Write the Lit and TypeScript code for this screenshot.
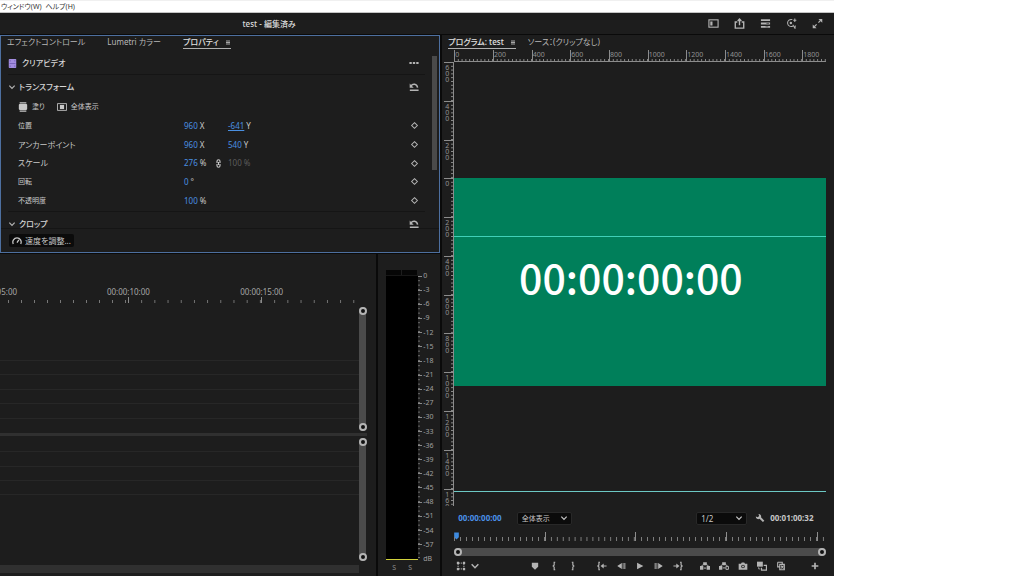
import { LitElement, html, css, svg } from "lit";
import { customElement } from "lit/decorators.js";

const shapes: Record<string, unknown> = {
  workspace: svg`<rect x="1" y="2" width="10" height="8" fill="none" stroke="currentColor" stroke-width="1.2"/><rect x="2.5" y="3.8" width="2.4" height="4.4" fill="currentColor"/>`,
  share: svg`<path d="M3.6 4.4H1.4V11h9.2V4.4H8.4M6 8V1.6M4 3.3L6 1.2l2 2.1" fill="none" stroke="currentColor" stroke-width="1.5"/>`,
  queue: svg`<path d="M1 2.4h10M1 6h10M1 9.6h10" stroke="currentColor" stroke-width="2"/><path d="M7 6h3M6 9.6h3" stroke="#1d1d1d" stroke-width=".6"/>`,
  review: svg`<path d="M7.6 8.800A3.900 3.900 0 1 1 7 1.800M7.400 7.400l2.400 3.800.3-3M9.600 .6v3.800M7.900 2.500h3.400" fill="none" stroke="currentColor" stroke-width="1.100"/><circle cx="5.300" cy="5.400" r="1.300" fill="currentColor"/>`,
  expand: svg`<path d="M7 1h4.200v4.200zM.8 7v4.200H5z" fill="currentColor"/><path d="M7 5l2.400-2.400M2.600 9.400L5 7" stroke="currentColor" stroke-width="1.400"/>`,
  menu: svg`<path d="M2 3h8M2 6h8M2 9h8" stroke="currentColor" stroke-width="1.400"/>`,
  clip: svg`<rect x="1" y="0" width="10" height="12" rx="1" fill="#a38de0"/><path d="M2 2.500h2M2 6h8M2 9.500h2M8 2.500h2M8 9.500h2" stroke="#6d5ab0" stroke-width="1"/>`,
  more: svg`<path d="M.5 4.800h2.800v2.400H.5zM4.600 4.800h2.800v2.400H4.600zM8.700 4.800h2.800v2.400H8.700z" fill="currentColor"/>`,
  down: svg`<path d="M2 4l4 4 4-4" fill="none" stroke="currentColor" stroke-width="1.800"/>`,
  reset: svg`<path d="M2.500 4.800C4 1.800 9.500 1.400 10.300 6.800M1 9.800h10.500" fill="none" stroke="currentColor" stroke-width="1.800"/><path d="M.8 1.800v5h4.800z" fill="currentColor"/>`,
  fill: svg`<rect x="1" y="2.500" width="10" height="7" rx="1" fill="currentColor"/><path d="M2 1h8M2 11h8" stroke="currentColor" stroke-width="1.400"/>`,
  fit: svg`<rect x=".7" y="2" width="10.600" height="8" fill="none" stroke="currentColor" stroke-width="1"/><rect x="3.500" y="3.500" width="5" height="5" fill="currentColor"/>`,
  diamond: svg`<path d="M6 2.200L9.800 6 6 9.800 2.200 6z" fill="none" stroke="currentColor" stroke-width="1.400"/>`,
  link: svg`<path d="M4 5.200V3a2 2 0 0 1 4 0v2.200M4 6.800V9a2 2 0 0 0 4 0V6.800M6 4v4" fill="none" stroke="currentColor" stroke-width="1.500"/>`,
  gauge: svg`<path d="M1.500 9.500a5 5 0 1 1 9 0M6 8l2.200-3.400" fill="none" stroke="currentColor" stroke-width="1.500"/>`,
  wrench: svg`<path d="M1 4.200L3.200 5.200 5 3.600 4.200 1.200A3 3 0 0 1 7.200 5.200l4 4-1.700 1.700L5.400 7A3 3 0 0 1 1 4.200z" fill="currentColor"/>`,
  safe: svg`<path d="M2.500 3.500v5M9.500 3.500v5M3.500 2.500h5M3.500 9.500h5" stroke="currentColor" stroke-width="1.200" stroke-dasharray="1.500 .8"/><path d="M1 1h2.600v2.600H1zM8.400 1H11v2.600H8.400zM1 8.400h2.600V11H1zM8.400 8.400H11V11H8.400z" fill="currentColor"/>`,
  marker: svg`<path d="M2.200 2.200h7.600V7L6 10.500 2.200 7z" fill="currentColor"/>`,
  inPoint: svg`<path d="M7.500 1.500H6.200v3.300L5 6l1.200 1.200v3.300h1.300" fill="none" stroke="currentColor" stroke-width="1.400"/>`,
  outPoint: svg`<path d="M4.500 1.500h1.300v3.300L7 6 5.800 7.200v3.300H4.500" fill="none" stroke="currentColor" stroke-width="1.400"/>`,
  goIn: svg`<path d="M3.600 1.500H2.300v3.300L1 6l1.300 1.200v3.300h1.300M6 6h5.500" fill="none" stroke="currentColor" stroke-width="1.400"/><path d="M8 3v6L4.300 6z" fill="currentColor"/>`,
  back: svg`<path d="M7 2.500v7L1.500 6zM8 2.500h1v7H8zM10 2.500h1.200v7H10z" fill="currentColor"/>`,
  play: svg`<path d="M2.500 2l7.500 4-7.500 4z" fill="currentColor"/>`,
  forward: svg`<path d="M5 2.500v7L10.500 6zM3 2.500h1v7H3zM.8 2.500H2v7H.8z" fill="currentColor"/>`,
  goOut: svg`<path d="M8.400 1.500h1.300v3.300L11 6 9.700 7.200v3.300H8.400M.5 6H6" fill="none" stroke="currentColor" stroke-width="1.400"/><path d="M4 3v6l3.700-3z" fill="currentColor"/>`,
  lift: svg`<path d="M0 6h4v4.500H0zM8 6h4v4.500H8zM3.800 1.500h4.400v3.500H3.800z" fill="currentColor"/><path d="M2 6l2-2M10 6L8 4M4.500 8.500h3" stroke="currentColor" stroke-width="1.200"/>`,
  extract: svg`<path d="M0 6h4v4.500H0zM3.800 1.500h4.400v3.500H3.800z" fill="currentColor"/><path d="M8.300 6.500h3V10h-3zM2 6l2-2M10 6L8 4M4.500 8.300h3" fill="none" stroke="currentColor" stroke-width="1.200"/>`,
  camera: svg`<path fill-rule="evenodd" d="M.8 3.300h2.800l.9-1.500h3l.9 1.500h2.800v7.200H.8zM6 4.400a2.200 2.200 0 1 0 0 4.400 2.200 2.200 0 0 0 0-4.400z" fill="currentColor"/><circle cx="6" cy="6.600" r="1.200" fill="currentColor"/>`,
  compare: svg`<path d="M0 .8h7v6H0z" fill="currentColor"/><path d="M8 5.200h3.300V11H5.400V8" fill="none" stroke="currentColor" stroke-width="1.400"/><path d="M2 7.500v2h2" fill="none" stroke="currentColor"/>`,
  proxy: svg`<path d="M2 1.500h5.500v2M2 1.500V7h2M4.500 4h5.500v6.500H4.500zM6 5.500l3 3.500M9 5.500L6 9" fill="none" stroke="currentColor" stroke-width="1.300"/>`,
  plus: svg`<path d="M6 2v8M2 6h8" stroke="currentColor" stroke-width="2"/>`,
  playhead: svg`<path d="M2 0h8v8l-4 4-4-4z" fill="#3f8be0"/>`,
};

const icon = (name: string) =>
  html`<svg class="icon" viewBox="0 0 12 12" aria-hidden="true">${shapes[name]}</svg>`;

const iconButton = (name: string, label: string) =>
  html`<button class="tool" aria-label=${label}>${icon(name)}</button>`;

interface Row {
  label: string;
  x: string;
  xUnit: string;
  y?: string;
  yUnit?: string;
  linked?: boolean;
  active?: boolean;
}

const rows: Row[] = [
  { label: "位置", x: "960", xUnit: "X", y: "-641", yUnit: "Y", active: true },
  { label: "アンカーポイント", x: "960", xUnit: "X", y: "540", yUnit: "Y" },
  { label: "スケール", x: "276", xUnit: "%", y: "100", yUnit: "%", linked: true },
  { label: "回転", x: "0", xUnit: "°" },
  { label: "不透明度", x: "100", xUnit: "%" },
];

const base = css`
  *, *::before, *::after { box-sizing: border-box; }
  button, select {
    font: inherit; color: inherit; background: none; border: 0; padding: 0; margin: 0;
    font-feature-settings: inherit;
  }
  .icon { display: block; width: 10px; height: 10px; flex: none; }
  .tool { display: flex; align-items: center; justify-content: center; width: 12px; height: 12px; flex: none; color: #b4b4b4; }
  .tabs { display: flex; align-items: flex-start; height: 14px; }
  .tab { display: flex; align-items: center; gap: 6px; height: 13px; border-bottom: 1px solid transparent; white-space: nowrap; line-height: 12px; color: #b8b8b8; }
  .tab.on { border-color: #b0b0b0; color: #e2e2e2; font-weight: 500; }
  .tab .icon { width: 6px; height: 7px; }
`;

@customElement("properties-panel")
export class PropertiesPanel extends LitElement {
  static styles = [base, css`
    :host { display: flex; flex-direction: column; border: 1px solid #4d6f9f; background: #1d1d1d; min-width: 0; min-height: 0; overflow: hidden; }
    .tabs { gap: 22px; padding-left: 6px; }
    .body { display: flex; flex: 1; min-height: 0; margin-top: 2px; border-bottom: 1px solid #151515; }
    .content { flex: 1; min-width: 0; overflow: hidden; padding: 0 7px; color: #c8c8c8; }
    .line { display: flex; align-items: center; padding: 0 5px 0 0; }
    .line .tool { margin-left: auto; }
    .clip { height: 23px; gap: 5px; border-bottom: 1px solid #151515; font-weight: 500; color: #d6d6d6; }
    .clip > .icon { width: 9px; height: 9px; }
    .section { height: 24px; gap: 4px; color: #d6d6d6; font-weight: 500; }
    .section .fold { width: 7px; margin-left: 0; }
    .section .fold .icon { width: 8px; height: 8px; }
    .grid { display: grid; grid-template-rows: repeat(6, 1fr); height: 114px; margin-top: -1px; padding-bottom: 1px; border-bottom: 1px solid #151515; font-size: 7px; }
    .modes { display: flex; align-items: center; gap: 12px; padding-left: 10px; }
    .mode { display: flex; align-items: center; gap: 4px; }
    .prop { display: grid; grid-template-columns: 166px 30px 14px 1fr 12px; align-items: center; padding: 0 5px 0 10px; }
    .kana { font-size: 8px; }
    .num { display: flex; align-items: baseline; gap: 2px; font-size: 8px; line-height: 12px; white-space: nowrap; }
    .num button { color: #4a8fe0; line-height: 12px; }
    .num .active { text-decoration: underline; }
    .dim, .num .dim { color: #5c5c5c; }
    .prop .icon { width: 9px; height: 9px; }
    .scroll { width: 5px; margin-right: 2px; padding-top: 4px; }
    .thumb { height: 66%; background: #4a4a4a; }
    .foot { height: 23px; display: flex; align-items: center; padding: 0 0 0 8px; }
    .speed { display: flex; align-items: center; gap: 3px; height: 13px; padding: 0 3px; background: #0b0b0b; border-radius: 2px; color: #c8c8c8; }
  `];

  render() {
    return html`
      <div class="tabs" role="tablist">
        <button class="tab" role="tab">エフェクトコントロール</button>
        <button class="tab" role="tab">Lumetri カラー</button>
        <button class="tab on" role="tab" aria-selected="true">プロパティ${icon("menu")}</button>
      </div>
      <div class="body">
        <div class="content">
          <div class="line clip">${icon("clip")}<span>クリアビデオ</span>${iconButton("more", "その他")}</div>
          <div class="line section">
            <button class="tool fold" aria-label="折りたたむ">${icon("down")}</button>
            <span>トランスフォーム</span>${iconButton("reset", "リセット")}
          </div>
          <div class="grid">
            <div class="modes">
              <button class="mode">${icon("fill")}塗り</button>
              <button class="mode">${icon("fit")}全体表示</button>
            </div>
            ${rows.map((r) => html`
              <div class="prop">
                <span class=${/[ァ-ヴ]/.test(r.label) ? "kana" : ""}>${r.label}</span>
                <span class="num"><button aria-label=${r.label}>${r.x}</button>${r.xUnit}</span>
                <span>${r.linked ? icon("link") : ""}</span>
                <span class="num">${r.y
                  ? html`<button class=${r.active ? "active" : r.linked ? "dim" : ""} aria-label=${r.label}>${r.y}</button><span class=${r.linked ? "dim" : ""}>${r.yUnit}</span>`
                  : ""}</span>
                ${iconButton("diamond", "キーフレーム")}
              </div>`)}
          </div>
          <div class="line section">
            <button class="tool fold" aria-label="折りたたむ">${icon("down")}</button>
            <span>クロップ</span>${iconButton("reset", "リセット")}
          </div>
        </div>
        <div class="scroll"><div class="thumb"></div></div>
      </div>
      <div class="foot"><button class="speed">${icon("gauge")}速度を調整...</button></div>
    `;
  }
}

@customElement("zoom-bar")
export class ZoomBar extends LitElement {
  static properties = { vertical: { type: Boolean, reflect: true } };
  static styles = css`
    :host { display: flex; justify-content: space-between; align-items: center; background: #4b4b4b; height: 8px; border-radius: 4px; }
    :host([vertical]) { flex-direction: column; width: 7px; height: auto; }
    .knob { width: 8px; height: 8px; flex: none; border: 2px solid #b4b4b4; border-radius: 50%; background: #111; box-sizing: border-box; }
  `;
  render() {
    return html`<span class="knob"></span><span class="knob"></span>`;
  }
}

@customElement("timeline-panel")
export class TimelinePanel extends LitElement {
  static styles = [base, css`
    :host { display: grid; grid-template-columns: minmax(0, 1fr) 8px; grid-template-rows: 53px 124px 7px 123px 4px 8px; background: #1d1d1d; padding-right: 9px; align-content: start; overflow: hidden; }
    .ruler { display: flex; align-items: flex-end; height: 49px; overflow: hidden; }
    .part { flex: 0 0 37.100%; min-width: 0; }
    .part.first { flex-basis: 35.600%; }
    .stamp { display: block; font-size: 8px; line-height: 10px; color: #a6a6a6; text-align: center; width: 42px; margin-left: -21px; }
    .part.first .stamp { margin-left: -26px; }
    .ticks { height: 6px; border-left: 1px solid #8a8a8a;
      background: linear-gradient(to right, #777 0 1px, transparent 1px) -1px 100% / 10% 3px repeat-x; }
    .first .ticks { border: 0; background-position-x: 8px; background-size: 13px 3px; }
    .tracks { display: flex; flex-direction: column; }
    .tracks.video { align-self: end; height: 73px; margin-bottom: 12px; }
    .tracks.audio { height: 57px; }
    .track { flex: 1; border-bottom: 1px solid #272727; }
    .split { grid-column: 1 / 3; align-self: center; height: 3px; background: #303030; }
    .hscroll { grid-row: 6; background: #303030; }
  `];
  render() {
    const track = html`<div class="track"></div>`;
    return html`
      <div class="ruler">
        <div class="part first"><span class="stamp">00:00:05:00</span><div class="ticks"></div></div>
        ${["00:00:10:00", "00:00:15:00"].map((t) => html`<div class="part"><span class="stamp">${t}</span><div class="ticks"></div></div>`)}
      </div>
      <div></div>
      <div class="tracks video">${[1, 2, 3, 4, 5].map(() => track)}</div>
      <zoom-bar vertical></zoom-bar>
      <div class="split"></div>
      <div class="tracks audio">${[1, 2, 3, 4].map(() => track)}</div>
      <zoom-bar vertical></zoom-bar>
      <div class="hscroll"></div>
    `;
  }
}

@customElement("audio-meters")
export class AudioMeters extends LitElement {
  static styles = [base, css`
    :host { display: grid; grid-template-columns: 32px 5px 1fr; grid-template-rows: minmax(0, 1fr) 16px; background: #1d1d1d; padding: 16px 0 0 8px; color: #a0a0a0; }
    .bars { display: grid; grid-template-columns: 1fr 1fr; grid-template-rows: 5px 1fr; row-gap: 1px; background: #171717; border-bottom: 1px solid #d2d23c; }
    .bar { background: #000; }
    .peak { background: #060606; border-right: 1px solid #1d1d1d; }
    .ticks { display: flex; flex-direction: column; padding: 6px 1px 2px 0; }
    .tick { flex: 1; border-top: 1px solid #8a8a8a; background: linear-gradient(#777 0 1px, transparent 1px) 0 -1px / 2px 33.300% repeat-y; }
    .scale { display: flex; flex-direction: column; justify-content: space-between; padding: 2px 0 0 0; margin-bottom: -3px; font-size: 7px; line-height: 8px; }
    .solo { display: flex; justify-content: space-around; align-items: center; font-size: 7px; }
    .solo button { color: #8a8a8a; }
  `];
  render() {
    const marks = Array.from({ length: 21 }, (_, i) => (i === 20 ? "dB" : i === 0 ? "0" : `-${i * 3}`));
    return html`
      <div class="bars"><span class="peak"></span><span class="peak"></span><span class="bar"></span><span class="bar"></span></div>
      <div class="ticks">${marks.slice(1).map(() => html`<span class="tick"></span>`)}</div>
      <div class="scale">${marks.map((m) => html`<span>${m}</span>`)}</div>
      <div class="solo"><button>S</button><button>S</button></div>
    `;
  }
}

@customElement("program-monitor")
export class ProgramMonitor extends LitElement {
  static styles = [base, css`
    :host { display: flex; flex-direction: column; background: #1d1d1d; min-width: 0; min-height: 0; padding: 1px 8px 0 2px; overflow: hidden; }
    .tabs { gap: 12px; padding-left: 4px; }
    .view { display: grid; grid-template-columns: 10px minmax(0, 1fr); grid-template-rows: 12px minmax(0, 1fr); flex: 1; min-height: 0; font-size: 7px; color: #929292; }
    .across { grid-column: 2; display: flex; overflow: hidden; border-bottom: 1px solid #8c8c8c; }
    .across .unit { flex: none; height: 11px; border-left: 1px solid #8c8c8c; line-height: 9px;
      background: linear-gradient(to right, #8c8c8c 0 1px, transparent 1px) -1px 100% / 10% 2px repeat-x; }
    .down { grid-column: 1; display: flex; flex-direction: column; overflow: hidden; border-right: 1px solid #8c8c8c; }
    .down .unit { flex: none; border-top: 1px solid #8c8c8c; padding: 2px 0 0 1px; line-height: 6px;
      background: linear-gradient(#8c8c8c 0 1px, transparent 1px) 100% -1px / 2px 10% repeat-y; }
    .digit { display: block; }
    .stage { position: relative; display: grid; grid-template-rows: 115fr auto 119fr; min-height: 0; }
    .frame { grid-row: 2; aspect-ratio: 16 / 9; display: flex; align-items: center; justify-content: center; background: #007f5a; color: #fff; font: 500 41px/42px "Noto Sans CJK JP", sans-serif; }
    .frame span { margin: 0 18px 12px 0; }
    .guide { position: absolute; left: 0; right: 0; height: 1px; background: #40d0b8; }
    .guide.upper { top: 39.300%; }
    .guide.lower { top: 96.600%; background: #6cc8c4; }
    .status { display: flex; align-items: center; height: 26px; padding: 0 12px 2px 14px; font-size: 8px; }
    .time { font-weight: 700; color: #c6c6c6; margin-left: 4px; }
    .time.now { color: #4a90e8; margin: 0 15px 0 0; }
    .pick { display: inline-grid; align-items: center; height: 13px; background: #0b0b0b; border: 1px solid #282828; border-radius: 2px; }
    .pick select { grid-area: 1 / 1; appearance: none; width: 53px; height: 11px; padding: 0 14px 0 4px; line-height: 11px; color: #c8c8c8; font-size: 7px; }
    .pick.res select { width: 49px; font-size: 8px; }
    .pick .icon { grid-area: 1 / 1; justify-self: end; width: 8px; height: 8px; margin-right: 3px; pointer-events: none; }
    .pick.res { margin-left: auto; margin-right: 7px; }
    .scrub { display: flex; align-items: flex-start; height: 14px; padding-left: 10px; }
    .scrub > .icon { width: 7px; height: 8px; margin-right: -6px; margin-left: -1px; }
    .track { display: flex; flex: 1; overflow: hidden; }
    .span { flex: 0 0 24.400%; height: 9px; border-left: 1px solid #8c8c8c;
      background: linear-gradient(to right, #7d7d7d 0 1px, transparent 1px) -1px 100% / 6.670% 4px repeat-x; }
    .span:first-child { border-color: transparent; }
    zoom-bar { margin: 2px 0 0 10px; }
    .transport { display: flex; align-items: center; height: 20px; padding: 0 5px 0 11px; }
    .group { display: flex; gap: 7px; }
    .group.close { gap: 2px; }
    .group.marks { margin-left: auto; margin-right: 17px; }
    .group.edit { margin: 0 22px 0 15px; }
  `];

  unit(value: number, vertical: boolean) {
    const share = vertical ? (38.7 / 443) * 100 : (200 / 1920) * 100;
    const text = vertical ? [...String(value)].map((d) => html`<span class="digit">${d}</span>`) : value;
    return html`<div class="unit" style=${`${vertical ? "height" : "width"}:${share}%`}>${text}</div>`;
  }

  render() {
    const xs = Array.from({ length: 10 }, (_, i) => i * 200);
    const ys = Array.from({ length: 12 }, (_, i) => Math.abs(i * 200 - 600));
    return html`
      <div class="tabs" role="tablist">
        <button class="tab on" role="tab" aria-selected="true">プログラム: test${icon("menu")}</button>
        <button class="tab" role="tab">ソース：(クリップなし)</button>
      </div>
      <div class="view">
        <div class="across">${xs.map((v) => this.unit(v, false))}</div>
        <div class="down">${ys.map((v) => this.unit(v, true))}</div>
        <div class="stage">
          <div class="frame"><span>00:00:00:00</span></div>
          <div class="guide upper"></div>
          <div class="guide lower"></div>
        </div>
      </div>
      <div class="status">
        <span class="time now">00:00:00:00</span>
        <span class="pick"><select aria-label="ズームレベル"><option>全体表示</option></select>${icon("down")}</span>
        <span class="pick res"><select aria-label="再生時の解像度"><option>1/2</option></select>${icon("down")}</span>
        ${iconButton("wrench", "設定")}
        <span class="time">00:01:00:32</span>
      </div>
      <div class="scrub">${icon("playhead")}<div class="track">${[0, 1, 2, 3, 4].map(() => html`<div class="span"></div>`)}</div></div>
      <zoom-bar></zoom-bar>
      <div class="transport">
        <div class="group close">${iconButton("safe", "オーバーレイ")}${iconButton("down", "メニュー")}</div>
        <div class="group marks">${iconButton("marker", "マーカーを追加")}${iconButton("inPoint", "インをマーク")}${iconButton("outPoint", "アウトをマーク")}</div>
        <div class="group">${iconButton("goIn", "インへ移動")}${iconButton("back", "1フレーム前へ")}${iconButton("play", "再生")}${iconButton("forward", "1フレーム先へ")}${iconButton("goOut", "アウトへ移動")}</div>
        <div class="group edit">${iconButton("lift", "リフト")}${iconButton("extract", "抽出")}${iconButton("camera", "フレームを書き出し")}${iconButton("compare", "比較表示")}${iconButton("proxy", "プロキシの切り替え")}</div>
        ${iconButton("plus", "ボタンエディター")}
      </div>
    `;
  }
}

@customElement("app-root")
export class AppRoot extends LitElement {
  static styles = [base, css`
    :host { display: block; height: 100vh; background: #fff; font: 400 8px/12px "Noto Sans", "Noto Sans CJK JP", sans-serif; font-feature-settings: "palt"; color: #c8c8c8; overflow: hidden; }
    .app { display: grid; grid-template-rows: 13px 22px minmax(0, 1fr); width: 81.400%; height: 100%; background: #0a0a0a; }
    .menu { display: flex; gap: 4px; align-items: center; background: #fff; border-bottom: 1px solid #c4c4c4; border-top: 1px solid #f0f0f0; padding-left: 1px; }
    .menu button { color: #333; font-size: 7px; line-height: 11px; }
    .head { display: flex; align-items: center; background: #1d1d1d; border-bottom: 1px solid #0a0a0a; padding: 0 10px 0 29.100%; }
    .title { margin: 0; font-size: 8px; font-weight: 500; color: #dcdcdc; }
    .actions { display: flex; gap: 14px; margin-left: auto; }
    .actions .icon { width: 11px; height: 11px; }
    .main { display: grid; grid-template-columns: minmax(0, 440fr) minmax(0, 391fr); column-gap: 2px; min-height: 0; }
    .left { display: grid; grid-template-rows: 218px minmax(0, 1fr); row-gap: 1px; min-height: 0; }
    .lower { display: grid; grid-template-columns: minmax(0, 376fr) minmax(0, 62fr); column-gap: 2px; min-height: 0; }
  `];
  render() {
    return html`
      <div class="app">
        <nav class="menu"><button>ウィンドウ(W)</button><button>ヘルプ(H)</button></nav>
        <header class="head">
          <h1 class="title">test - 編集済み</h1>
          <div class="actions">
            ${iconButton("workspace", "ワークスペース")}${iconButton("share", "クイック書き出し")}${iconButton("queue", "進行状況")}${iconButton("review", "検索")}${iconButton("expand", "フルスクリーン")}
          </div>
        </header>
        <main class="main">
          <div class="left">
            <properties-panel></properties-panel>
            <div class="lower"><timeline-panel></timeline-panel><audio-meters></audio-meters></div>
          </div>
          <program-monitor></program-monitor>
        </main>
      </div>
    `;
  }
}
